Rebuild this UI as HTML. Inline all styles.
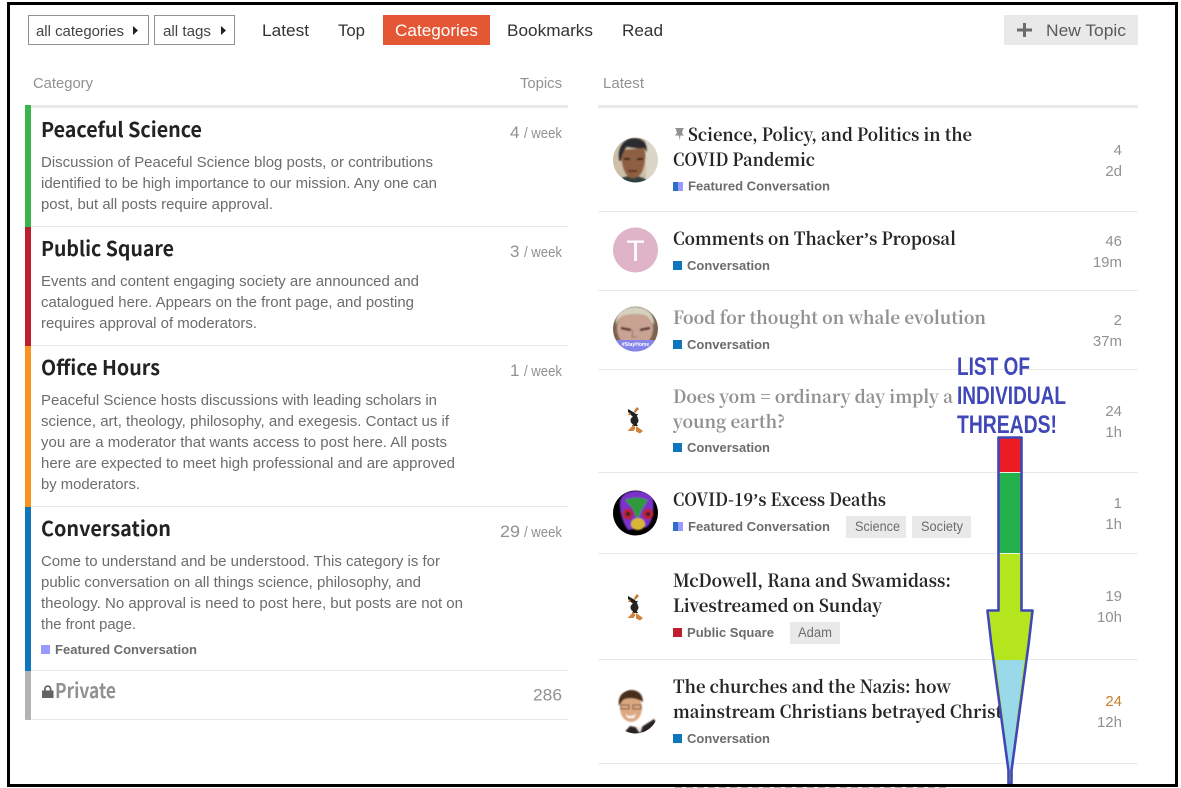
<!DOCTYPE html>
<html><head><meta charset="utf-8"><style>
html,body{margin:0;padding:0;background:#fff;width:1181px;height:788px;overflow:hidden}
svg{display:block}
text{font-family:"Liberation Sans",sans-serif;white-space:pre}
.d{font-size:14.6px;fill:#6c6c6c}
.n{font-family:"Noto Sans CJK JP","DejaVu Sans",sans-serif;font-weight:700;font-size:20.5px;fill:#222}
.t{font-family:"Noto Serif CJK SC","DejaVu Serif",serif;font-weight:700;font-size:18px;fill:#262626;transform:translateY(1px)}
.ap{font-family:"Liberation Serif",serif;font-weight:bold}
.g{fill:#919191}
.c{font-size:13px;font-weight:bold;fill:#6c6c6c}
.s{font-size:15px;fill:#919191;text-anchor:end}
.h{font-size:14.8px;fill:#919191}
.m{font-size:17px;fill:#333}
.a{font-size:25px;font-weight:bold;fill:#4048b8}
.tg{font-size:13.5px;fill:#6c6c6c}
.w{font-size:14.5px;fill:#919191}
.k{font-size:17px;fill:#919191}
</style></head><body>
<svg width="1181" height="788" viewBox="0 0 1181 788" xmlns="http://www.w3.org/2000/svg">
<defs>
<clipPath id="c1"><circle cx="635.5" cy="160" r="22.5"/></clipPath>
<clipPath id="c3"><circle cx="635.5" cy="329" r="22.5"/></clipPath>
<clipPath id="c5"><circle cx="635.5" cy="513" r="22.5"/></clipPath>
<clipPath id="c7"><circle cx="635.5" cy="711" r="22.5"/></clipPath>
<filter id="b" x="-10%" y="-10%" width="120%" height="120%"><feGaussianBlur stdDeviation="0.7"/></filter>
</defs>
<rect width="1181" height="788" fill="#fff"/>

<!-- top nav -->
<rect x="28.5" y="15.5" width="120" height="29" fill="#fff" stroke="#919191"/>
<text x="36" y="36" font-size="15" fill="#444" textLength="88" lengthAdjust="spacingAndGlyphs">all categories</text>
<path d="M133 26l5 4.5-5 4.5z" fill="#222"/>
<rect x="154.500" y="15.500" width="80" height="29" fill="#fff" stroke="#919191"/>
<text x="163" y="36" font-size="15" fill="#444" textLength="48" lengthAdjust="spacingAndGlyphs">all tags</text>
<path d="M221 26l5 4.500-5 4.500z" fill="#222"/>
<text class="m" x="262" y="36" textLength="47" lengthAdjust="spacingAndGlyphs">Latest</text>
<text class="m" x="338" y="36" textLength="27" lengthAdjust="spacingAndGlyphs">Top</text>
<rect x="383" y="15" width="107" height="30" fill="#e45735"/>
<text x="395" y="36" font-size="17" fill="#fff" textLength="83" lengthAdjust="spacingAndGlyphs">Categories</text>
<text class="m" x="507" y="36" textLength="86" lengthAdjust="spacingAndGlyphs">Bookmarks</text>
<text class="m" x="622" y="36" textLength="41" lengthAdjust="spacingAndGlyphs">Read</text>
<rect x="1004" y="15" width="134" height="30" fill="#e9e9e9"/>
<path d="M1017 28.500h15v3h-15zM1023 23h3v14h-3z" fill="#6c6c6c"/>
<text x="1046" y="36" font-size="17" fill="#5a5a5a" textLength="80" lengthAdjust="spacingAndGlyphs">New Topic</text>

<!-- headers -->
<text class="h" x="33" y="88" textLength="60" lengthAdjust="spacingAndGlyphs">Category</text>
<text class="h" x="520" y="88" textLength="42" lengthAdjust="spacingAndGlyphs">Topics</text>
<text class="h" x="603" y="88" textLength="41" lengthAdjust="spacingAndGlyphs">Latest</text>
<rect x="25" y="105" width="543" height="3" fill="#e9e9e9"/>
<rect x="598" y="105" width="540" height="3" fill="#e9e9e9"/>

<!-- category bars -->
<rect x="25" y="105" width="6" height="122" fill="#3ab54a"/>
<rect x="25" y="227" width="6" height="119" fill="#bf1e2e"/>
<rect x="25" y="346" width="6" height="161" fill="#f7941d"/>
<rect x="25" y="507" width="6" height="164" fill="#0e76bd"/>
<rect x="25" y="671" width="6" height="49" fill="#b3b3b3"/>
<g fill="#e9e9e9">
<rect x="31" y="226" width="537" height="1"/><rect x="31" y="345" width="537" height="1"/><rect x="31" y="506" width="537" height="1"/><rect x="31" y="670" width="537" height="1"/><rect x="31" y="719" width="537" height="1"/>
</g>

<!-- categories -->
<text class="n" x="41" y="137" textLength="161" lengthAdjust="spacingAndGlyphs">Peaceful Science</text>
<text class="d" x="41" y="167" textLength="392" lengthAdjust="spacingAndGlyphs">Discussion of Peaceful Science blog posts, or contributions</text>
<text class="d" x="41" y="188" textLength="396" lengthAdjust="spacingAndGlyphs">identified to be high importance to our mission. Any one can</text>
<text class="d" x="41" y="209" textLength="232" lengthAdjust="spacingAndGlyphs">post, but all posts require approval.</text>

<text class="n" x="41" y="256" textLength="133" lengthAdjust="spacingAndGlyphs">Public Square</text>
<text class="d" x="41" y="286" textLength="378" lengthAdjust="spacingAndGlyphs">Events and content engaging society are announced and</text>
<text class="d" x="41" y="307" textLength="373" lengthAdjust="spacingAndGlyphs">catalogued here. Appears on the front page, and posting</text>
<text class="d" x="41" y="328" textLength="216" lengthAdjust="spacingAndGlyphs">requires approval of moderators.</text>

<text class="n" x="41" y="375" textLength="119" lengthAdjust="spacingAndGlyphs">Office Hours</text>
<text class="d" x="41" y="405" textLength="396" lengthAdjust="spacingAndGlyphs">Peaceful Science hosts discussions with leading scholars in</text>
<text class="d" x="41" y="426" textLength="408" lengthAdjust="spacingAndGlyphs">science, art, theology, philosophy, and exegesis. Contact us if</text>
<text class="d" x="41" y="447" textLength="406" lengthAdjust="spacingAndGlyphs">you are a moderator that wants access to post here. All posts</text>
<text class="d" x="41" y="468" textLength="414" lengthAdjust="spacingAndGlyphs">here are expected to meet high professional and are approved</text>
<text class="d" x="41" y="489" textLength="99" lengthAdjust="spacingAndGlyphs">by moderators.</text>

<text class="n" x="41" y="536" textLength="130" lengthAdjust="spacingAndGlyphs">Conversation</text>
<text class="d" x="41" y="566" textLength="399" lengthAdjust="spacingAndGlyphs">Come to understand and be understood. This category is for</text>
<text class="d" x="41" y="587" textLength="380" lengthAdjust="spacingAndGlyphs">public conversation on all things science, philosophy, and</text>
<text class="d" x="41" y="608" textLength="422" lengthAdjust="spacingAndGlyphs">theology. No approval is need to post here, but posts are not on</text>
<text class="d" x="41" y="629" textLength="95" lengthAdjust="spacingAndGlyphs">the front page.</text>
<rect x="41" y="645" width="9" height="9" fill="#9999ff"/>
<text class="c" x="55" y="654" textLength="142" lengthAdjust="spacingAndGlyphs">Featured Conversation</text>

<path d="M42 690.500h11.500v7.500h-11.500zM44 690.500v-1.500a3.700 3.700 0 0 1 7.500 0v1.500h-1.800v-1.500a1.900 1.900 0 0 0-3.900 0v1.500z" fill="#646464"/>
<text class="n g" x="55" y="698" textLength="61" lengthAdjust="spacingAndGlyphs">Private</text>

<!-- category stats -->
<text x="510" y="138" class="k">4</text><text x="524" y="138" class="w" textLength="38" lengthAdjust="spacingAndGlyphs">/ week</text>
<text x="510" y="257" class="k">3</text><text x="524" y="257" class="w" textLength="38" lengthAdjust="spacingAndGlyphs">/ week</text>
<text x="510" y="376" class="k">1</text><text x="524" y="376" class="w" textLength="38" lengthAdjust="spacingAndGlyphs">/ week</text>
<text x="500" y="537" class="k" textLength="20" lengthAdjust="spacingAndGlyphs">29</text><text x="524" y="537" class="w" textLength="38" lengthAdjust="spacingAndGlyphs">/ week</text>
<text x="533" y="700.500" class="k" textLength="29" lengthAdjust="spacingAndGlyphs">286</text>

<!-- separators -->
<g fill="#e9e9e9">
<rect x="598" y="211" width="540" height="1"/><rect x="598" y="290" width="540" height="1"/><rect x="598" y="369" width="540" height="1"/><rect x="598" y="472" width="540" height="1"/><rect x="598" y="553" width="540" height="1"/><rect x="598" y="659" width="540" height="1"/><rect x="598" y="763" width="540" height="1"/>
</g>

<!-- avatars -->
<g clip-path="url(#c1)">
<g filter="url(#b)">
<rect x="611" y="135" width="50" height="50" fill="#cdbfa8"/>
<rect x="646" y="135" width="15" height="50" fill="#dcd6c8"/>
<path d="M618 185c0-7 5-9 14-9s16 2 17 9z" fill="#31403c"/>
<path d="M621 150c0 14 3 28 12 28 8 0 11-8 12-18 1-6 0-10-1-12z" fill="#8f5f42"/>
<path d="M619 161c-3-14 6-24 16-23 8 0 13 5 12 14l-3-4c-5 1-12 0-17-1-3 3-5 7-6 14z" fill="#2c2c30"/>
<rect x="624" y="158" width="6" height="2" fill="#2b1c14"/><rect x="637" y="158" width="6" height="2" fill="#2b1c14"/>
<path d="M628 171h9" stroke="#5a3526" stroke-width="2"/>
</g>
</g>
<circle cx="635.500" cy="250" r="22.500" fill="#e0b4c8"/>
<text x="635.500" y="261" font-size="30" fill="#fff" text-anchor="middle">T</text>
<g clip-path="url(#c3)">
<g filter="url(#b)">
<rect x="611" y="305" width="50" height="50" fill="#7c6450"/>
<ellipse cx="635" cy="328" rx="18" ry="20" fill="#c9a392"/>
<path d="M616 325c-1-13 9-18 19-18s19 5 19 18c-3-5-6-9-9-10-7-2-18-1-23 1-3 2-5 5-6 9z" fill="#d4d2bf"/>
<path d="M621 328l10 2M640 330l10-2" stroke="#54362e" stroke-width="2.500"/>
<path d="M633 330l-1 7h5" fill="none" stroke="#a06f60"/>
</g>
<rect x="611" y="340" width="50" height="14" fill="#8484ea"/>
<text x="635.500" y="346" font-size="5" font-weight="bold" fill="#fff" text-anchor="middle">#StayHome</text>
</g>
<g id="duck">
<path d="M628 409l7 4 3 5-4 0-6-6z" fill="#1e1e1e"/><path d="M637 407l2 2-4 4-1-2z" fill="#c8742c"/><path d="M630 412l-2 3 3 0z" fill="#c8742c"/>
<circle cx="634.500" cy="420.500" r="4" fill="#222"/><path d="M631 414h7l-3 5zM632 426h6l-3-5z" fill="#222"/>
<path d="M627.500 431l6-6 2 3-2 3zM636 426l7 5-3 2.500-4-2z" fill="#d0803a"/>
</g>
<use href="#duck" y="187"/>
<circle cx="635.500" cy="513" r="22.500" fill="#000"/>
<g clip-path="url(#c5)">
<g filter="url(#b)">
<path d="M620 501c2-8 10-10 16-10 9 0 16 2 17 9 1 11 0 21-6 27l-19 3c-6-8-9-20-8-29z" fill="#7a30c8"/>
<path d="M625 500c6-3 17-3 23 0l-6 9-3 8h-3l-3-8z" fill="#2f9a3a"/>
<circle cx="628" cy="514" r="5.500" fill="#b8203a"/><circle cx="628" cy="514" r="2" fill="#222"/>
<circle cx="648" cy="514" r="5.500" fill="#b8203a"/><circle cx="648" cy="514" r="2" fill="#222"/>
<ellipse cx="638" cy="524" rx="7" ry="6" fill="#d8b830"/>
</g>
</g>
<g clip-path="url(#c7)">
<g filter="url(#b)">
<path d="M622 735l8-9 10 2 14-9 2 3-3 13z" fill="#2a2420"/>
<path d="M636 727l4 6 2-6z" fill="#f3ede4"/>
<ellipse cx="631" cy="708" rx="11" ry="14" fill="#dba880"/>
<path d="M619 706c-2-11 6-16 12-16 7 0 12 4 12 12-6-4-15-5-20-2z" fill="#4a2e1e"/>
<path d="M621 705h8v4h-8zM633 705h8v4h-8z" fill="none" stroke="#6a5040"/>
<path d="M625 714c4 3 8 3 11-1l-2 5h-6z" fill="#fff"/>
</g>
</g>

<!-- topics -->
<path d="M675 128h9l-1 1.500-1 3.500 2 2.500h-3.500l-.8 5-.8-5h-3.900l2-2.500-1-3.500z" fill="#919191"/>
<text class="t" x="688" y="140" textLength="284" lengthAdjust="spacingAndGlyphs">Science, Policy, and Politics in the</text>
<text class="t" x="673" y="165" textLength="142" lengthAdjust="spacingAndGlyphs">COVID Pandemic</text>
<rect x="673" y="182" width="5" height="9" fill="#2f6fc8"/><rect x="678" y="182" width="5" height="9" fill="#9999ff"/>
<text class="c" x="688" y="190.500" textLength="142" lengthAdjust="spacingAndGlyphs">Featured Conversation</text>
<text class="s" x="1122" y="155">4</text><text class="s" x="1122" y="176">2d</text>

<text class="t" x="673" y="244" textLength="283" lengthAdjust="spacingAndGlyphs">Comments on Thacker<tspan class="ap">’</tspan>s Proposal</text>
<rect x="673" y="261" width="9" height="9" fill="#0e76bd"/>
<text class="c" x="687" y="270" textLength="83" lengthAdjust="spacingAndGlyphs">Conversation</text>
<text class="s" x="1122" y="246">46</text><text class="s" x="1122" y="267">19m</text>

<text class="t g" x="673" y="323" textLength="313" lengthAdjust="spacingAndGlyphs">Food for thought on whale evolution</text>
<rect x="673" y="340" width="9" height="9" fill="#0e76bd"/>
<text class="c" x="687" y="349" textLength="83" lengthAdjust="spacingAndGlyphs">Conversation</text>
<text class="s" x="1122" y="325">2</text><text class="s" x="1122" y="346">37m</text>

<text class="t g" x="673" y="402" textLength="280" lengthAdjust="spacingAndGlyphs">Does yom = ordinary day imply a</text>
<text class="t g" x="673" y="427" textLength="112" lengthAdjust="spacingAndGlyphs">young earth?</text>
<rect x="673" y="443" width="9" height="9" fill="#0e76bd"/>
<text class="c" x="687" y="452" textLength="83" lengthAdjust="spacingAndGlyphs">Conversation</text>
<text class="s" x="1122" y="416">24</text><text class="s" x="1122" y="437">1h</text>

<text class="t" x="673" y="505" textLength="213" lengthAdjust="spacingAndGlyphs">COVID-19<tspan class="ap">’</tspan>s Excess Deaths</text>
<rect x="673" y="522" width="5" height="9" fill="#2f6fc8"/><rect x="678" y="522" width="5" height="9" fill="#9999ff"/>
<text class="c" x="688" y="531" textLength="142" lengthAdjust="spacingAndGlyphs">Featured Conversation</text>
<rect x="846" y="516" width="60" height="22" fill="#e9e9e9"/>
<text class="tg" x="855" y="531" textLength="45" lengthAdjust="spacingAndGlyphs">Science</text>
<rect x="912" y="516" width="59" height="22" fill="#e9e9e9"/>
<text class="tg" x="921" y="531" textLength="42" lengthAdjust="spacingAndGlyphs">Society</text>
<text class="s" x="1122" y="508">1</text><text class="s" x="1122" y="529">1h</text>

<text class="t" x="673" y="586" textLength="278" lengthAdjust="spacingAndGlyphs">McDowell, Rana and Swamidass:</text>
<text class="t" x="673" y="611" textLength="209" lengthAdjust="spacingAndGlyphs">Livestreamed on Sunday</text>
<rect x="673" y="628" width="9" height="9" fill="#bf1e2e"/>
<text class="c" x="687" y="637" textLength="87" lengthAdjust="spacingAndGlyphs">Public Square</text>
<rect x="790" y="622" width="50" height="22" fill="#e9e9e9"/>
<text class="tg" x="798" y="637" textLength="34" lengthAdjust="spacingAndGlyphs">Adam</text>
<text class="s" x="1122" y="601">19</text><text class="s" x="1122" y="622">10h</text>

<text class="t" x="673" y="692" textLength="278" lengthAdjust="spacingAndGlyphs">The churches and the Nazis: how</text>
<text class="t" x="673" y="717" textLength="329" lengthAdjust="spacingAndGlyphs">mainstream Christians betrayed Christ</text>
<rect x="673" y="734" width="9" height="9" fill="#0e76bd"/>
<text class="c" x="687" y="743" textLength="83" lengthAdjust="spacingAndGlyphs">Conversation</text>
<text class="s" x="1122" y="706" style="fill:#c67d2f">24</text><text class="s" x="1122" y="727">12h</text>

<!-- annotation arrow -->
<path d="M999 438.500h22v172h11l-3.500 32-17 127.500v14h-2v-14l-17-127.500-3.500-32h10.500z" fill="#b5e61d"/>
<rect x="999" y="438" width="22" height="34" fill="#ed1c24"/>
<rect x="999" y="473" width="22" height="80" fill="#22b14c"/>
<path d="M996 660h28l-14 115z" fill="#99d9ea"/>
<rect x="999" y="472" width="22" height="1" fill="#e8f5e8"/><rect x="999" y="553" width="22" height="1" fill="#e8f5e8"/>
<path d="M998.500 437.500h23v173h11l-3.800 33-17.200 127v13h-3v-13l-17.200-127-3.800-33h11z" fill="none" stroke="#4048b8" stroke-width="2.600" stroke-linejoin="round"/>
<text class="a" x="957" y="375" textLength="73" lengthAdjust="spacingAndGlyphs">LIST OF</text>
<text class="a" x="957" y="404" textLength="109" lengthAdjust="spacingAndGlyphs">INDIVIDUAL</text>
<text class="a" x="957" y="433" textLength="100" lengthAdjust="spacingAndGlyphs">THREADS!</text>

<!-- outer frame -->
<rect x="8.500" y="3.500" width="1168" height="782" fill="none" stroke="#000" stroke-width="3"/>
<path d="M675 787.500h275" stroke="#aaa" stroke-width="1" stroke-dasharray="7 4"/>
</svg>
</body></html>
